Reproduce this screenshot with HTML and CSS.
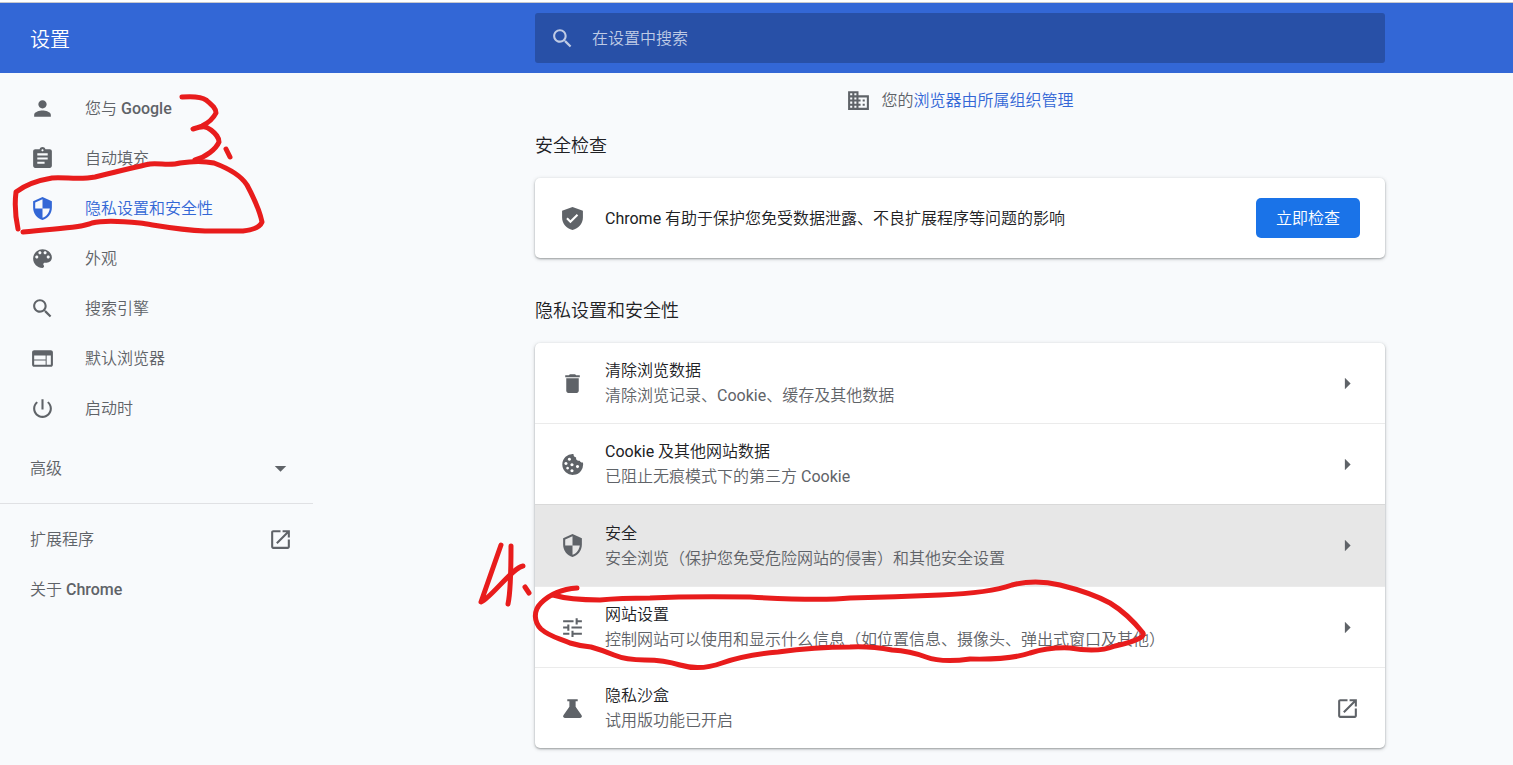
FILE: index.html
```html
<!DOCTYPE html>
<html lang="zh-CN">
<head>
<meta charset="utf-8">
<title>设置</title>
<link rel="stylesheet" href="styles.css">
</head>
<body>
<svg class="sprite" aria-hidden="true">
  <symbol id="person" viewBox="0 0 24 24"><path d="M12 12c2.21 0 4-1.79 4-4s-1.79-4-4-4-4 1.79-4 4 1.79 4 4 4zm0 2c-2.67 0-8 1.34-8 4v2h16v-2c0-2.66-5.33-4-8-4z"/></symbol>
  <symbol id="assignment" viewBox="0 0 24 24"><path d="M19 3h-4.180C14.4 1.840 13.3 1 12 1c-1.300 0-2.400.840-2.820 2H5c-1.100 0-2 .9-2 2v14c0 1.100.9 2 2 2h14c1.100 0 2-.9 2-2V5c0-1.100-.9-2-2-2zm-7 0c.550 0 1 .450 1 1s-.450 1-1 1-1-.450-1-1 .450-1 1-1zm2 14H7v-2h7v2zm3-4H7v-2h10v2zm0-4H7V7h10v2z"/></symbol>
  <symbol id="shield" viewBox="0 0 24 24"><path d="M12 1L3 5v6c0 5.550 3.840 10.740 9 12 5.160-1.260 9-6.450 9-12V5l-9-4zm0 10.990h7c-.530 4.120-3.280 7.790-7 8.940V12H5V6.300l7-3.110v8.800z"/></symbol>
  <symbol id="palette" viewBox="0 0 24 24"><path d="M12 3c-4.970 0-9 4.030-9 9s4.030 9 9 9c.830 0 1.500-.670 1.500-1.500 0-.390-.150-.740-.390-1.010-.230-.260-.380-.610-.380-.990 0-.830.670-1.500 1.500-1.500H16c2.760 0 5-2.240 5-5 0-4.420-4.030-8-9-8zm-5.500 9c-.830 0-1.500-.670-1.500-1.500S5.670 9 6.500 9 8 9.670 8 10.500 7.330 12 6.500 12zm3-4C8.670 8 8 7.330 8 6.500S8.670 5 9.500 5s1.500.670 1.500 1.500S10.330 8 9.500 8zm5 0c-.830 0-1.500-.670-1.500-1.500S13.670 5 14.500 5s1.500.670 1.500 1.500S15.330 8 14.500 8zm3 4c-.830 0-1.500-.670-1.500-1.500S16.670 9 17.500 9s1.500.670 1.500 1.500-.670 1.500-1.500 1.500z"/></symbol>
  <symbol id="search" viewBox="0 0 24 24"><path d="M15.500 14h-.790l-.280-.270C15.410 12.590 16 11.110 16 9.500 16 5.910 13.090 3 9.500 3S3 5.910 3 9.500 5.910 16 9.500 16c1.610 0 3.090-.590 4.230-1.570l.270.280v.790l5 4.990L20.490 19l-4.990-5zm-6 0C7.010 14 5 11.990 5 9.500S7.010 5 9.500 5 14 7.010 14 9.500 11.990 14 9.500 14z"/></symbol>
  <symbol id="web" viewBox="0 0 24 24"><path d="M20 4H4c-1.100 0-2 .9-2 2v12c0 1.100.9 2 2 2h16c1.100 0 2-.9 2-2V6c0-1.100-.9-2-2-2zm-5 14H4v-4h11v4zm0-5H4V9h11v4zm5 5h-4V9h4v9z"/></symbol>
  <symbol id="power" viewBox="0 0 24 24"><path d="M13 3h-2v10h2V3zm4.830 2.170l-1.420 1.420C17.990 7.860 19 9.810 19 12c0 3.870-3.130 7-7 7s-7-3.130-7-7c0-2.190 1.010-4.140 2.580-5.420L6.170 5.170C4.230 6.820 3 9.260 3 12c0 4.970 4.030 9 9 9s9-4.030 9-9c0-2.740-1.230-5.180-3.170-6.830z"/></symbol>
  <symbol id="open" viewBox="0 0 24 24"><path d="M19 19H5V5h7V3H5c-1.110 0-2 .9-2 2v14c0 1.100.890 2 2 2h14c1.100 0 2-.9 2-2v-7h-2v7zM14 3v2h3.590l-9.830 9.830 1.410 1.410L19 6.410V10h2V3h-7z"/></symbol>
  <symbol id="domain" viewBox="0 0 24 24"><path d="M12 7V3H2v18h20V7H12zM6 19H4v-2h2v2zm0-4H4v-2h2v2zm0-4H4V9h2v2zm0-4H4V5h2v2zm4 12H8v-2h2v2zm0-4H8v-2h2v2zm0-4H8V9h2v2zm0-4H8V5h2v2zm10 12h-8v-2h2v-2h-2v-2h2v-2h-2V9h8v10zm-2-8h-2v2h2v-2zm0 4h-2v2h2v-2z"/></symbol>
  <symbol id="verified" viewBox="0 0 24 24"><path d="M12 1L2 4.500V11c0 5.550 4.200 10.740 10 12 5.800-1.260 10-6.450 10-12V4.500L12 1zm-2 15.500l-4-4 1.410-1.410L10 13.670l6.090-6.090L17.500 9 10 16.500z"/></symbol>
  <symbol id="delete" viewBox="0 0 24 24"><path d="M6 19c0 1.100.9 2 2 2h8c1.100 0 2-.9 2-2V7H6v12zM19 4h-3.500l-1-1h-5l-1 1H5v2h14V4z"/></symbol>
  <symbol id="cookie" viewBox="0 0 24 24"><path fill-rule="evenodd" d="M13 2A10 10 0 1 0 22 10C20.500 10.200 19.300 9.500 19 8.300C16.500 9 15 7.500 15.500 5.200C13.800 5 12.800 3.800 13 2zM9 5.500a1.500 1.500 0 1 0 .01 0zM5.700 9.500a1.500 1.500 0 1 0 .01 0zM11.500 10.800a1.500 1.500 0 1 0 .01 0zM16.800 12.500a1.500 1.500 0 1 0 .01 0zM7.300 14.200a1.300 1.300 0 1 0 .01 0zM11.500 16.500a1.500 1.500 0 1 0 .01 0z"/></symbol>
  <symbol id="tune" viewBox="0 0 24 24"><path d="M3 17v2h6v-2H3zM3 5v2h10V5H3zm10 16v-2h8v-2h-8v-2h-2v6h2zM7 9v2H3v2h4v2h2V9H7zm14 4v-2H11v2h10zm-6-4h2V7h4V5h-4V3h-2v6z"/></symbol>
  <symbol id="flask" viewBox="0 0 24 24"><path d="M7 3h10v2h-2v5.300l5.700 8.200c.8 1.200 0 2.500-1.300 2.500H4.600c-1.300 0-2.100-1.300-1.300-2.500L9 10.300V5H7z"/></symbol>
  <symbol id="right" viewBox="0 0 24 24"><path d="M9.500 6.500l5.500 5.500-5.500 5.500z"/></symbol>
  <symbol id="down" viewBox="0 0 24 24"><path d="M6.500 9.500l5.500 5.500 5.500-5.500z"/></symbol>
</svg>

<header class="toolbar">
  <h1 class="toolbar-title">设置</h1>
  <div class="toolbar-main">
    <label class="search-box">
      <svg class="icon"><use href="#search"/></svg>
      <input class="search-input" type="search" placeholder="在设置中搜索" aria-label="在设置中搜索">
    </label>
  </div>
</header>

<div class="layout">
  <nav class="sidebar">
    <a class="nav-item" href="#"><svg class="icon"><use href="#person"/></svg><span>您与 <b class="brand">Google</b></span></a>
    <a class="nav-item" href="#"><svg class="icon"><use href="#assignment"/></svg><span>自动填充</span></a>
    <a class="nav-item selected" href="#"><svg class="icon"><use href="#shield"/></svg><span>隐私设置和安全性</span></a>
    <a class="nav-item" href="#"><svg class="icon"><use href="#palette"/></svg><span>外观</span></a>
    <a class="nav-item" href="#"><svg class="icon"><use href="#search"/></svg><span>搜索引擎</span></a>
    <a class="nav-item" href="#"><svg class="icon"><use href="#web"/></svg><span>默认浏览器</span></a>
    <a class="nav-item" href="#"><svg class="icon"><use href="#power"/></svg><span>启动时</span></a>
    <button class="nav-item wide advanced" type="button"><span>高级</span><svg class="icon"><use href="#down"/></svg></button>
    <hr class="divider">
    <a class="nav-item wide" href="#"><span>扩展程序</span><svg class="icon"><use href="#open"/></svg></a>
    <a class="nav-item wide" href="#"><span>关于 <b class="brand">Chrome</b></span></a>
  </nav>

  <main class="content">
    <div class="column">
      <p class="managed"><svg class="icon"><use href="#domain"/></svg><span>您的<a class="link" href="#">浏览器由所属组织管理</a></span></p>

      <section>
        <h2 class="section-title">安全检查</h2>
        <div class="card">
          <div class="row">
            <svg class="icon"><use href="#verified"/></svg>
            <div class="row-text">Chrome 有助于保护您免受数据泄露、不良扩展程序等问题的影响</div>
            <button class="action" type="button">立即检查</button>
          </div>
        </div>
      </section>

      <section>
        <h2 class="section-title">隐私设置和安全性</h2>
        <div class="card">
          <a class="row" href="#">
            <svg class="icon"><use href="#delete"/></svg>
            <span class="row-text">清除浏览数据<span class="sub">清除浏览记录、Cookie、缓存及其他数据</span></span>
            <svg class="icon"><use href="#right"/></svg>
          </a>
          <a class="row" href="#">
            <svg class="icon"><use href="#cookie"/></svg>
            <span class="row-text">Cookie 及其他网站数据<span class="sub">已阻止无痕模式下的第三方 Cookie</span></span>
            <svg class="icon"><use href="#right"/></svg>
          </a>
          <a class="row active" href="#">
            <svg class="icon"><use href="#shield"/></svg>
            <span class="row-text">安全<span class="sub">安全浏览（保护您免受危险网站的侵害）和其他安全设置</span></span>
            <svg class="icon"><use href="#right"/></svg>
          </a>
          <a class="row" href="#">
            <svg class="icon"><use href="#tune"/></svg>
            <span class="row-text">网站设置<span class="sub">控制网站可以使用和显示什么信息（如位置信息、摄像头、弹出式窗口及其他）</span></span>
            <svg class="icon"><use href="#right"/></svg>
          </a>
          <a class="row" href="#">
            <svg class="icon"><use href="#flask"/></svg>
            <span class="row-text">隐私沙盒<span class="sub">试用版功能已开启</span></span>
            <svg class="icon"><use href="#open"/></svg>
          </a>
        </div>
      </section>
    </div>
  </main>
</div>

<svg class="ink" width="1200" height="700" aria-hidden="true">
  <path d="M182 97C196 96 202 97 206 100C212 105 216 108 216 113C213 119 208 123 202 126L193 129C203 126 206 126 211 130C216 134 219 137 219 142C216 149 206 157 195 160"/>
  <path d="M226 149L230 157"/>
  <path d="M18 229C15 215 15 200 16 192C25 185 40 180 52 178C65 177 80 180 95 177C115 172 135 167 150 164C160 163 170 166 180 163C192 161 205 161 214 163C230 169 242 177 247 185C255 200 260 212 262 222C260 227 252 230 243 231L205 231C180 230 160 226 140 223C120 221 100 221 92 223C80 228 60 228 23 232"/>
  <path d="M501 545L481 602C491 598 512 568 523 566"/>
  <path d="M511 546C511 565 511 590 508 604"/>
  <path d="M525 587L529 593"/>
  <path d="M577 588C562 589 549 595 541 603C533 611 534 622 541 629C550 637 559 638 570 643Q580 646 591 647Q602 650 614 655Q626 660 645 660Q664 660 680 665Q700 671 722 663Q745 655 778 652Q815 647 850 647Q870 646 892 650Q910 651 926 657Q942 663 970 659Q1010 660 1030 653Q1050 647 1070 648Q1098 653 1115 646Q1146 639 1143 633Q1128 614 1110 603Q1092 593 1060 585Q1035 579 1012 585Q990 593 940 595Q895 597 850 598Q820 601 750 597Q690 596 650 598Q620 598 600 600Q570 600 553 595"/>
</svg>
</body>
</html>
```
FILE: styles.css
```css
* {
  box-sizing: border-box;
}

body {
  margin: 0;
  background: #f8fafc;
  color: #202124;
  font: 16px/25px Roboto, "Noto Sans CJK SC DemiLight", "Noto Sans CJK SC", sans-serif;
  border-top: 2px solid #fff;
  min-height: 100vh;
}

.sprite {
  display: none;
}

.icon {
  width: 25px;
  height: 25px;
  flex: none;
  fill: #5f6368;
}

.toolbar,
.layout {
  display: grid;
  grid-template-columns: 407px minmax(0, 1fr);
}

.toolbar {
  align-items: center;
  height: 71px;
  background: #3367d6;
  border-top: 1px solid #c8c8cc;
}

.toolbar-title {
  margin: 0;
  padding: 4px 0 0 30px;
  font-size: 20px;
  font-weight: 400;
  color: #fff;
}

.search-box {
  display: flex;
  align-items: center;
  gap: 17px;
  max-width: 850px;
  height: 50px;
  margin: 0 auto;
  padding: 0 15px;
  border-radius: 3px;
  background: #2850a7;
}

.search-box .icon {
  fill: #bfcbe5;
}

.search-input {
  flex: 1;
  min-width: 0;
  padding: 0;
  border: 0;
  outline: 0;
  background: none;
  color: #fff;
  font: inherit;
}

.search-input::placeholder {
  color: #bfcbe5;
}

.sidebar {
  width: 313px;
  padding-top: 10px;
}

.nav-item {
  display: flex;
  align-items: center;
  gap: 30px;
  width: 100%;
  height: 50px;
  padding: 0 20px 0 30px;
  border: 0;
  background: none;
  color: #5f6368;
  font: inherit;
  text-decoration: none;
}

.nav-item.selected {
  color: #3367d6;
}

.nav-item.selected .icon {
  fill: #3367d6;
}

.nav-item.wide {
  justify-content: space-between;
}

.brand {
  font-weight: 500;
}

.advanced {
  margin-top: 10px;
}

.divider {
  margin: 10px 0;
  border: 0;
  border-top: 1px solid #e0e1e4;
}

.column {
  max-width: 850px;
  margin: 0 auto;
}

.managed {
  display: flex;
  justify-content: center;
  align-items: center;
  gap: 10px;
  margin: 15px 0 0;
  color: #5f6368;
}

.link {
  color: #3367d6;
  text-decoration: none;
}

.section-title {
  margin: 0;
  padding: 20px 0;
  font-size: 18px;
  font-weight: 400;
}

.card {
  margin-bottom: 20px;
  border-radius: 5px;
  background: #fff;
  box-shadow: 0 1px 2px rgba(60, 64, 67, .4), 0 1px 4px rgba(60, 64, 67, .2);
  overflow: hidden;
}

.row {
  display: flex;
  align-items: center;
  gap: 20px;
  min-height: 80px;
  padding: 0 25px;
  color: inherit;
  text-decoration: none;
}

.row + .row {
  border-top: 1px solid #ebebeb;
  min-height: 81px;
}

.row + .row.active {
  min-height: 82px;
  border-color: #d9d9d9;
  background: #e7e7e7;
}

.row-text {
  flex: 1;
}

.sub {
  display: block;
  color: #5f6368;
}

.action {
  height: 40px;
  padding: 0 20px;
  border: 0;
  border-radius: 5px;
  background: #1a73e8;
  color: #fff;
  font: inherit;
}

.ink {
  position: absolute;
  top: 0;
  left: 0;
  pointer-events: none;
  fill: none;
  stroke: #e81c1c;
  stroke-width: 5;
  stroke-linecap: round;
  stroke-linejoin: round;
}
```
